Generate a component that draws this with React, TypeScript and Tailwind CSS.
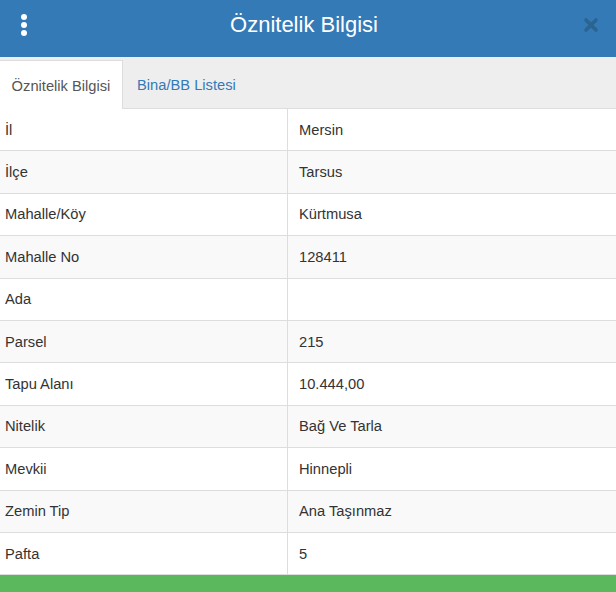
const rows: [string, string][] = [
  ["İl", "Mersin"],
  ["İlçe", "Tarsus"],
  ["Mahalle/Köy", "Kürtmusa"],
  ["Mahalle No", "128411"],
  ["Ada", ""],
  ["Parsel", "215"],
  ["Tapu Alanı", "10.444,00"],
  ["Nitelik", "Bağ Ve Tarla"],
  ["Mevkii", "Hinnepli"],
  ["Zemin Tip", "Ana Taşınmaz"],
  ["Pafta", "5"],
];

const App = () => {
  return (
    <div className="w-[616px] h-[592px] overflow-hidden bg-white flex flex-col font-['Liberation_Sans',Arial,sans-serif] text-[#333]">
      <div className="h-[57px] shrink-0 bg-[#337ab7] flex items-center px-[21px] pb-[8px]">
        <div className="flex flex-col gap-[2px] w-[6px]">
          <span className="w-[6px] h-[6px] rounded-full bg-white"></span>
          <span className="w-[6px] h-[6px] rounded-full bg-white"></span>
          <span className="w-[6px] h-[6px] rounded-full bg-white"></span>
        </div>
        <h1 className="flex-1 text-center text-white text-[22px] leading-none pr-[2px]">Öznitelik Bilgisi</h1>
        <svg width="16" height="16" viewBox="0 0 16 16" className="mr-[-4px]">
          <path d="M3 3 L13 13 M13 3 L3 13" stroke="#2b6391" strokeWidth="3.6" strokeLinecap="round" />
        </svg>
      </div>
      <div className="h-[52px] shrink-0 bg-[#eee] flex items-end border-b border-[#ddd]">
        <div className="h-[49px] w-[123px] bg-white border-t border-r border-[#ddd] -mb-px flex items-center justify-center text-[14.7px] text-[#555] pt-[2px]">
          Öznitelik Bilgisi
        </div>
        <div className="h-[48px] flex items-center pl-[14px] text-[14.7px] text-[#337ab7] pt-[2px]">Bina/BB Listesi</div>
      </div>
      <div className="flex flex-col">
        {rows.map(([k, v], i) => (
          <div
            key={k}
            className={`h-[42.4px] shrink-0 flex border-b border-[#ddd] text-[14.7px] ${i % 2 === 1 ? "bg-[#f9f9f9]" : "bg-white"}`}
          >
            <div className="w-[288px] shrink-0 border-r border-[#ddd] pl-[5px] flex items-center">{k}</div>
            <div className="flex-1 pl-[11px] flex items-center">{v}</div>
          </div>
        ))}
      </div>
      <div className="flex-1 bg-[#5cb85c]"></div>
    </div>
  );
};

export default App;
